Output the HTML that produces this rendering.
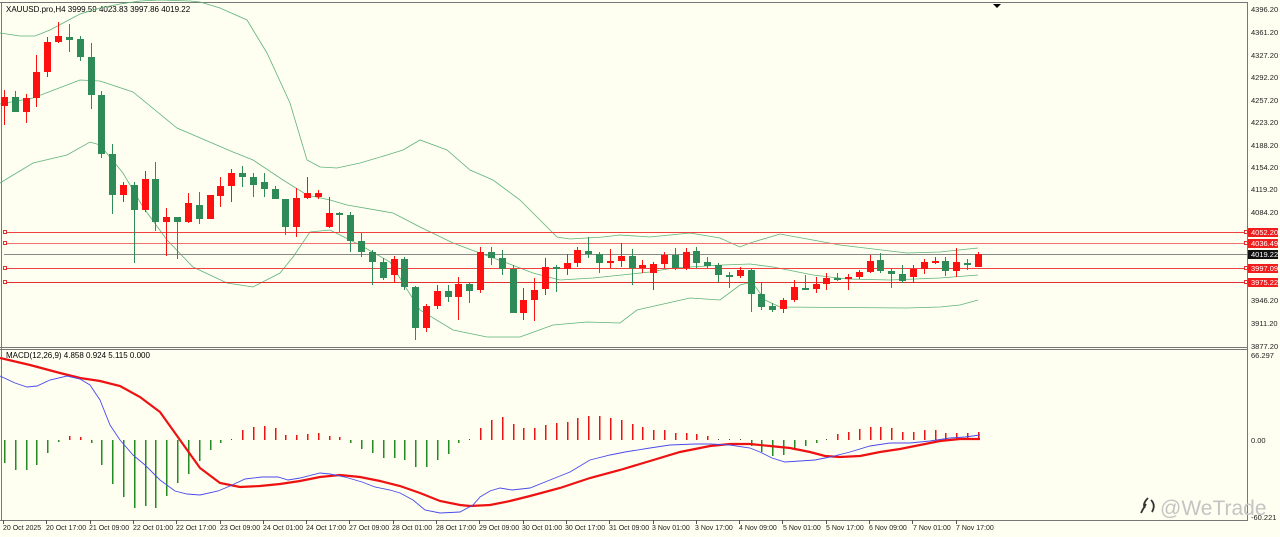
<!DOCTYPE html>
<html><head><meta charset="utf-8"><style>
html,body{margin:0;padding:0;background:#fefff0;width:1280px;height:537px;overflow:hidden}
svg{display:block}
text{font-family:"Liberation Sans",Tahoma,sans-serif}
</style></head><body>
<svg id="s" width="1280" height="537" viewBox="0 0 1280 537" xmlns="http://www.w3.org/2000/svg">
<rect width="1280" height="537" fill="#fefff0"/>
<g stroke="#777" stroke-width="1" fill="none" shape-rendering="crispEdges">
<line x1="0" y1="2.5" x2="1247" y2="2.5"/>
<line x1="1.5" y1="2" x2="1.5" y2="521"/>
<line x1="0" y1="347.5" x2="1247" y2="347.5"/>
<line x1="0" y1="349.5" x2="1247" y2="349.5"/>
<line x1="0" y1="520.5" x2="1247" y2="520.5"/>
<line x1="1247.5" y1="2" x2="1247.5" y2="521"/>
</g>
<polygon points="993,4 1001,4 997,8" fill="#000"/>
<text x="6" y="12" font-size="8" fill="#000">XAUUSD.pro,H4  3999.59 4023.83 3997.86 4019.22</text>
<text x="6" y="358" font-size="8" fill="#000">MACD(12,26,9) 4.858 0.924 5.115 0.000</text>
<g id="bb" fill="none" stroke="#5fb27a" stroke-width="0.8"></g>
<g shape-rendering="crispEdges">
<line x1="4" y1="232.5" x2="1247" y2="232.5" stroke="#f04040"/>
<line x1="4" y1="243.5" x2="1247" y2="243.5" stroke="#f07070"/>
<line x1="4" y1="254.5" x2="1247" y2="254.5" stroke="#888"/>
<line x1="4" y1="268.5" x2="1247" y2="268.5" stroke="#f04040"/>
<line x1="4" y1="282.5" x2="1247" y2="282.5" stroke="#e03030"/>
<g fill="#fefff0" stroke="#e03030"><rect x="3.5" y="230.5" width="3" height="3"/><rect x="3.5" y="241.5" width="3" height="3"/><rect x="3.5" y="266.5" width="3" height="3"/><rect x="3.5" y="280.5" width="3" height="3"/>
<rect x="1244.5" y="230.5" width="3" height="3"/><rect x="1244.5" y="241.5" width="3" height="3"/><rect x="1244.5" y="266.5" width="3" height="3"/><rect x="1244.5" y="280.5" width="3" height="3"/></g>
</g>
<g id="cd" shape-rendering="crispEdges"></g>
<g id="hist" shape-rendering="crispEdges" stroke-width="1.5"></g>
<polyline id="sig" fill="none" stroke="#ee1111" stroke-width="2.2"/>
<polyline id="mac" fill="none" stroke="#4a4aee" stroke-width="0.9"/>
<g font-size="7.5" fill="#222">
<text x="1251" y="12">4396.20</text><text x="1251" y="35">4361.20</text><text x="1251" y="58">4327.20</text>
<text x="1251" y="80">4292.20</text><text x="1251" y="103">4257.20</text><text x="1251" y="125">4223.20</text>
<text x="1251" y="148">4188.20</text><text x="1251" y="170">4154.20</text><text x="1251" y="192">4119.20</text>
<text x="1251" y="215">4084.20</text><text x="1251" y="303">3946.20</text><text x="1251" y="326">3911.20</text>
<text x="1251" y="349">3877.20</text><text x="1251" y="358">66.297</text><text x="1251" y="443">0.00</text>
<text x="1251" y="520">-60.221</text>
</g>
<g font-size="7.5" fill="#fff" shape-rendering="crispEdges">
<rect x="1248" y="228" width="30" height="9" fill="#f21d1d"/><text x="1251" y="235">4052.20</text>
<rect x="1248" y="239" width="30" height="9" fill="#f21d1d"/><text x="1251" y="246">4036.49</text>
<rect x="1248" y="250" width="30" height="9" fill="#111"/><text x="1251" y="257">4019.22</text>
<rect x="1248" y="264" width="30" height="9" fill="#f21d1d"/><text x="1251" y="271">3997.09</text>
<rect x="1248" y="278" width="30" height="9" fill="#f21d1d"/><text x="1251" y="285">3975.22</text>
</g>
<g id="ticks" stroke="#555" shape-rendering="crispEdges"></g>
<g font-size="7" fill="#222">
<text x="3" y="530">20 Oct 2025</text><text x="46" y="530">20 Oct 17:00</text><text x="89" y="530">21 Oct 09:00</text>
<text x="133" y="530">22 Oct 01:00</text><text x="176" y="530">22 Oct 17:00</text><text x="220" y="530">23 Oct 09:00</text>
<text x="263" y="530">24 Oct 01:00</text><text x="306" y="530">24 Oct 17:00</text><text x="349" y="530">27 Oct 09:00</text>
<text x="392" y="530">28 Oct 01:00</text><text x="436" y="530">28 Oct 17:00</text><text x="479" y="530">29 Oct 09:00</text>
<text x="522" y="530">30 Oct 01:00</text><text x="565" y="530">30 Oct 17:00</text><text x="609" y="530">31 Oct 09:00</text>
<text x="652" y="530">3 Nov 01:00</text><text x="695" y="530">3 Nov 17:00</text><text x="739" y="530">4 Nov 09:00</text>
<text x="783" y="530">5 Nov 01:00</text><text x="826" y="530">5 Nov 17:00</text><text x="869" y="530">6 Nov 09:00</text>
<text x="913" y="530">7 Nov 01:00</text><text x="956" y="530">7 Nov 17:00</text>
</g>
<path d="M1148 498 q-6 6 -3 10 M1146 504 q-3 5 -5 9 M1151 500 q5 5 1 12" stroke="#333" stroke-width="1.8" fill="none"/>
<text x="1160" y="515" font-size="21" fill="#c4c4c4">@WeTrade</text>
</svg>
<script>
var NS="http://www.w3.org/2000/svg";
function el(p,t,a){var e=document.createElementNS(NS,t);for(var k in a)e.setAttribute(k,a[k]);p.appendChild(e);return e;}
var X=function(i){return Math.round(4+i*10.82)};
var C=[
"r",97,106,90,125,"g",97,112,91,112,"r",98,112,94,123,"r",72,98,55,107,"r",42,72,37,77,"r",36,42,22,43,"g",37,40,24,52,"g",39,57,36,61,"g",57,95,43,109,"g",95,154,91,158,
"g",154,195,144,214,"r",185,195,182,202,"g",185,210,182,263,"r",179,210,171,212,"g",179,222,162,231,"r",217,222,208,256,"g",217,222,217,259,"r",203,222,193,223,"g",205,219,192,224,"r",195,219,195,219,
"r",186,196,177,207,"r",173,186,169,202,"g",173,177,166,187,"g",177,185,173,197,"g",182,189,173,197,"g",189,199,186,199,"g",199,227,199,235,"r",198,227,188,237,"r",193,198,177,199,"r",193,197,190,199,
"r",213,227,197,228,"g",213,215,212,232,"g",215,241,212,252,"g",241,252,233,257,"g",252,262,250,285,"g",262,278,258,280,"r",259,275,256,283,"g",259,287,257,290,"g",287,328,286,340,"r",306,328,304,332,
"r",291,306,285,309,"g",291,297,285,302,"r",284,297,277,320,"g",284,291,283,303,"r",252,290,247,293,"g",252,258,247,265,"g",258,269,250,275,"g",269,313,265,313,"r",300,313,288,320,"r",290,300,278,321,
"r",267,289,258,295,"g",267,269,265,292,"r",263,269,254,275,"r",250,263,247,267,"g",251,254,237,258,"g",254,263,252,273,"r",261,263,249,268,"r",256,261,243,267,"g",256,268,249,285,"r",265,268,260,273,
"r",264,273,262,290,"r",255,264,252,268,"g",255,268,248,270,"r",252,268,248,270,"g",251,263,247,268,"g",262,266,257,268,"g",265,275,263,282,"g",275,277,272,288,"r",270,276,267,278,"g",270,294,268,312,
"g",294,307,283,310,"g",306,310,303,312,"r",300,309,298,313,"r",287,300,280,302,"g",288,289,275,290,"r",284,289,277,293,"r",278,284,273,290,"g",278,280,273,281,"r",277,279,274,290,"r",272,277,270,279,
"r",261,272,255,273,"g",260,271,253,273,"g",271,274,268,288,"g",274,281,265,283,"r",269,277,265,283,"r",262,269,259,274,"r",261,263,257,264,"g",261,271,257,276,"r",262,271,248,277,"g",263,265,259,270,
"r",254,267,252,267];
var cd=document.getElementById("cd");
for(var i=0;i<C.length/5;i++){var c=C[i*5]=="r"?"#ff1010":"#2e8a57",bt=C[i*5+1],bb=C[i*5+2],wt=C[i*5+3],wb=C[i*5+4],x=X(i);
el(cd,"rect",{x:x,y:wt,width:1,height:Math.max(1,wb-wt),fill:c});
el(cd,"rect",{x:x-3,y:bt,width:7,height:Math.max(2,bb-bt),fill:c});}
var H=[463,470,470,465,453,442,436,437,443,465,484,497,508,506,508,496,483,474,461,450,443,439,430,427,426,428,435,435,434,433,436,437,443,449,453,458,458,460,467,467,460,454,443,441,428,420,417,424,428,428,425,423,422,418,416,416,418,420,424,427,430,430,433,433,434,436,439,439,439,446,452,456,455,450,446,443,441,434,432,429,427,427,428,432,432,430,430,433,433,433,432];
var h=document.getElementById("hist");
for(var i=0;i<H.length;i++){var v=H[i],x=X(i)+0.5;if(Math.abs(v-440)<1.5){el(h,"rect",{x:x-0.5,y:439,width:1,height:1,fill:"#444"});continue;}
el(h,"line",{x1:x,x2:x,y1:440,y2:v,stroke:v>440?"#228b22":"#ee1111"});}
document.getElementById("sig").setAttribute("points","0,358 30,365 60,373 80,378 100,381 120,386 140,397 160,412 180,440 200,468 220,483 240,487 260,486 280,484 300,481 320,477 340,475 360,477 380,481 400,486 420,493 440,501 460,505 470,506 490,505 510,501 530,496 560,488 590,478 620,470 650,461 680,452 710,446 730,444 750,444 770,446 790,448 810,452 825,456 840,457 860,456 880,452 900,449 920,445 940,441 960,439 980,439");
document.getElementById("mac").setAttribute("points","0,376 15,383 27,387 37,386 50,380 67,376 80,379 90,385 100,400 110,425 120,440 133,455 145,465 160,480 175,491 187,494 200,495 218,491 230,486 245,479 262,477 278,477 288,480 300,478 320,473 330,474 345,477 362,482 375,487 390,490 400,493 413,500 425,510 440,513 460,512 473,505 480,497 490,491 500,488 512,490 530,488 550,480 570,472 590,460 610,455 625,452 650,448 670,445 695,444 710,444 730,445 750,448 760,452 772,458 785,462 800,461 815,460 830,457 850,452 870,446 890,443 910,443 930,441 950,438 965,437 980,435");
var bb=document.getElementById("bb");
["0,33 20,36 35,36 50,30 65,22 80,14 100,8 120,4 140,1 160,0 190,1 200,2 220,8 247,20 267,53 290,103 307,160 320,167 337,168 360,163 387,155 403,150 420,140 447,150 470,170 493,180 520,200 537,217 557,237 570,239 603,237 620,235 650,237 690,233 720,238 740,247 750,243 780,234 840,245 907,253 940,252 978,248",
"0,104 33,98 80,80 100,81 133,92 177,128 233,152 253,160 283,180 307,195 330,200 347,205 393,213 420,227 453,243 477,252 507,263 533,273 560,280 593,278 650,272 673,268 723,265 750,264 773,267 813,275 847,279 890,280 940,278 978,275",
"0,183 33,163 67,155 90,142 100,145 123,173 143,207 167,240 193,267 227,283 253,287 280,273 293,257 310,232 330,230 360,245 390,262 403,283 420,310 453,330 487,337 520,337 553,325 587,322 620,323 637,310 650,307 690,298 720,300 740,285 752,282 765,300 780,307 907,308 940,307 960,305 978,300"].forEach(function(p){el(bb,"polyline",{points:p});});
var tk=document.getElementById("ticks");
for(var i=0;i<23;i++){var x=Math.round(3+i*43.3)+0.5;el(tk,"line",{x1:x,x2:x,y1:520,y2:524});}
</script>
</body></html>
